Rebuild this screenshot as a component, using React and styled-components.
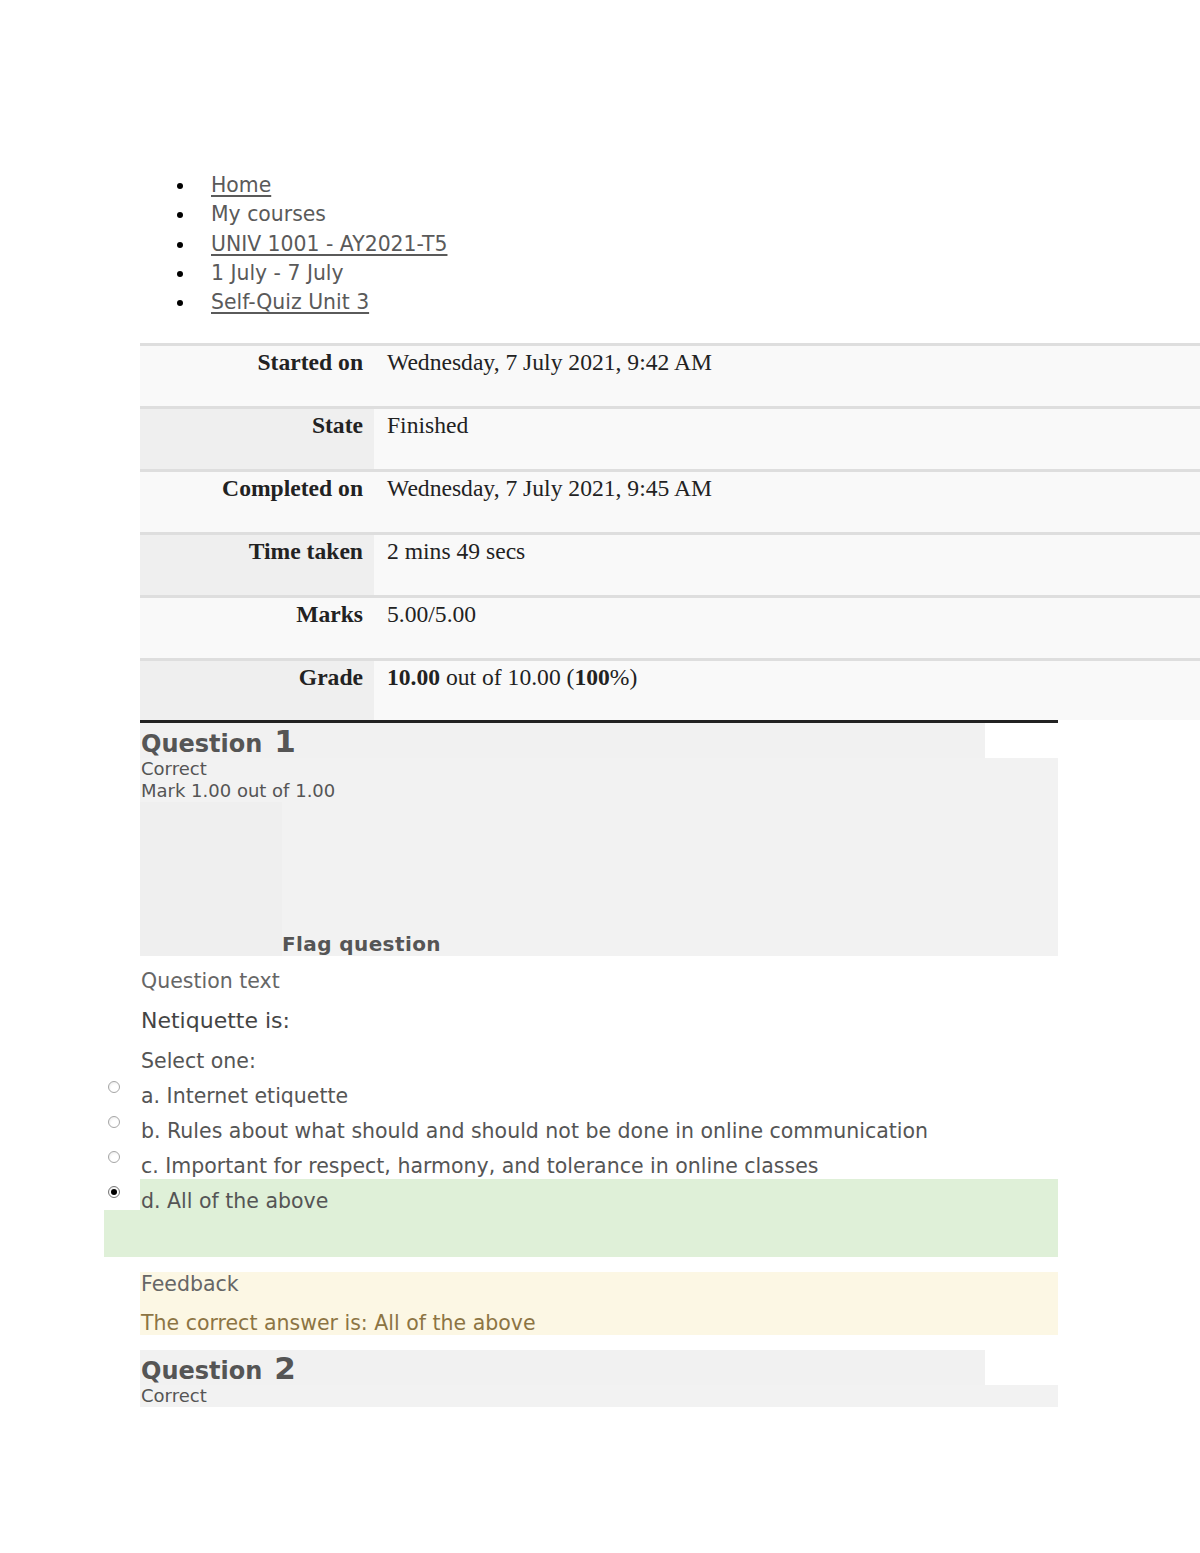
import React from 'react'
import styled, { createGlobalStyle } from 'styled-components'

const GlobalStyle = createGlobalStyle`
  html, body {
    margin: 0;
    padding: 0;
    background: #fff;
    overflow-x: hidden;
  }
  body {
    font-family: "DejaVu Sans", Verdana, sans-serif;
    color: #555;
  }
`

const Page = styled.div`
  padding: 171px 0 60px 140px;
`

const Crumbs = styled.ul`
  margin: 0;
  padding: 0 0 0 37px;
  list-style: none;
  font-size: 20.4px;
  line-height: 29.3px;
  color: #5a5a5a;

  li::before {
    content: '';
    display: inline-block;
    width: 6px;
    height: 6px;
    border-radius: 50%;
    background: #000;
    margin-right: 28px;
    vertical-align: 3px;
  }
`

const CrumbLink = styled.a`
  color: #5a5a5a;
  text-decoration: underline;
  text-underline-offset: 3px;
`

const Summary = styled.table`
  margin-top: 26px;
  width: 1100px;
  border-collapse: collapse;
  font-family: "Liberation Serif", "Times New Roman", serif;
  font-size: 23.6px;
  color: #222;
`

const Row = styled.tr`
  height: ${p => (p.$last ? 60 : 63)}px;
  border-top: 3px solid #dedede;
`

const Head = styled.th`
  width: 223px;
  padding: 3px 11px 0 0;
  text-align: right;
  vertical-align: top;
  line-height: 26px;
  font-weight: bold;
  background: ${p => (p.$shade ? '#efefef' : '#f9f9f9')};
`

const Cell = styled.td`
  padding: 3px 0 0 13px;
  vertical-align: top;
  line-height: 26px;
  background: #f9f9f9;
`

const Que = styled.div`
  width: 918px;
  border-top: ${p => (p.$first ? '3px solid #222' : 'none')};
  margin-top: ${p => (p.$first ? 0 : 15)}px;
`

const QueHeader = styled.h3`
  margin: 0;
  width: 845px;
  height: 35px;
  background: #f1f1f1;
  font-size: 24px;
  line-height: 37px;
  font-weight: bold;
  color: #555;
  padding-left: 1px;
  box-sizing: border-box;
`

const QueNo = styled.span`
  font-size: 31px;
  margin-left: 12px;
`

const Info = styled.div`
  background: #f2f2f2;
  font-size: 18px;
  line-height: 22px;
  color: #555;
  padding-left: 1px;
`

const FlagRow = styled.div`
  display: flex;
  align-items: flex-end;
  height: 154px;
  margin-left: -1px;
`

const FlagPad = styled.div`
  width: 142px;
  align-self: stretch;
  background: #efefef;
`

const FlagText = styled.div`
  font-size: 20px;
  font-weight: bold;
  letter-spacing: 0.4px;
  line-height: 24px;
  color: #555;
`

const Content = styled.div`
  padding-left: 1px;
`

const Para = styled.p`
  margin: ${p => p.$top || 0}px 0 0;
  font-size: ${p => p.$size || 20.5}px;
  line-height: ${p => p.$line || 26}px;
  color: ${p => p.$color || '#555'};
`

const Answers = styled.div`
  margin-left: -36px;
  width: 954px;
`

const Option = styled.div`
  display: flex;
  height: 31px;
  margin-top: 4px;

  &:first-child {
    margin-top: 0;
  }
`

const RadioCol = styled.div`
  width: 36px;
  flex: none;
  padding: 7px 0 0 4px;
  box-sizing: border-box;
`

const Radio = styled.span`
  display: block;
  width: 12px;
  height: 12px;
  box-sizing: border-box;
  border-radius: 50%;
  border: 1px solid #a6a6a6;
  background: radial-gradient(circle at 60% 65%, #fff 40%, #e4e4e4 100%);
  position: relative;

  ${p => p.$checked && `
    border-color: #777;
    &::after {
      content: '';
      position: absolute;
      left: 2px;
      top: 2px;
      width: 6px;
      height: 6px;
      border-radius: 50%;
      background: #000;
    }
  `}
`

const Label = styled.div`
  flex: 1;
  padding: 9px 0 0 1px;
  line-height: 26px;
  font-size: 20.5px;
  color: #555;
  white-space: nowrap;
  background: ${p => (p.$right ? '#dff0d8' : 'transparent')};
`

const Outcome = styled.div`
  height: 47px;
  background: #dff0d8;
`

const Feedback = styled.div`
  margin-top: 15px;
  height: 63px;
  background: #fcf7e4;
  padding-left: 1px;
`

const FeedbackTitle = styled.div`
  font-size: 20.5px;
  line-height: 24px;
  color: #666;
`

const RightAnswer = styled.div`
  margin-top: 14px;
  font-size: 20.5px;
  line-height: 26px;
  color: #8c7443;
`

const ShortInfo = styled(Info)`
  height: 22px;
`

const summary = [
  ['Started on', 'Wednesday, 7 July 2021, 9:42 AM'],
  ['State', 'Finished'],
  ['Completed on', 'Wednesday, 7 July 2021, 9:45 AM'],
  ['Time taken', '2 mins 49 secs'],
  ['Marks', '5.00/5.00'],
  ['Grade', <><b>10.00</b> out of 10.00 (<b>100</b>%)</>]
]

const options = [
  'a. Internet etiquette',
  'b. Rules about what should and should not be done in online communication',
  'c. Important for respect, harmony, and tolerance in online classes',
  'd. All of the above'
]

export default function App () {
  return (
    <>
      <GlobalStyle />
      <Page>
        <Crumbs>
          <li><CrumbLink>Home</CrumbLink></li>
          <li>My courses</li>
          <li><CrumbLink>UNIV 1001 - AY2021-T5</CrumbLink></li>
          <li>1 July - 7 July</li>
          <li><CrumbLink>Self-Quiz Unit 3</CrumbLink></li>
        </Crumbs>

        <Summary>
          <tbody>
            {summary.map(([label, value], i) => (
              <Row key={label} $last={i === summary.length - 1}>
                <Head $shade={i % 2 === 1}>{label}</Head>
                <Cell>{value}</Cell>
              </Row>
            ))}
          </tbody>
        </Summary>

        <Que $first>
          <QueHeader>Question<QueNo>1</QueNo></QueHeader>
          <Info>
            <div>Correct</div>
            <div>Mark 1.00 out of 1.00</div>
            <FlagRow>
              <FlagPad />
              <FlagText>Flag question</FlagText>
            </FlagRow>
          </Info>
          <Content>
            <Para $top={12} $color="#666">Question text</Para>
            <Para $top={13} $size={22} $line={28} $color="#444">Netiquette is:</Para>
            <Para $top={13}>Select one:</Para>
          </Content>
          <Answers>
            {options.map((text, i) => (
              <Option key={text}>
                <RadioCol><Radio $checked={i === 3} /></RadioCol>
                <Label $right={i === 3}>{text}</Label>
              </Option>
            ))}
            <Outcome />
          </Answers>
          <Feedback>
            <FeedbackTitle>Feedback</FeedbackTitle>
            <RightAnswer>The correct answer is: All of the above</RightAnswer>
          </Feedback>
        </Que>

        <Que>
          <QueHeader>Question<QueNo>2</QueNo></QueHeader>
          <ShortInfo>Correct</ShortInfo>
        </Que>
      </Page>
    </>
  )
}
